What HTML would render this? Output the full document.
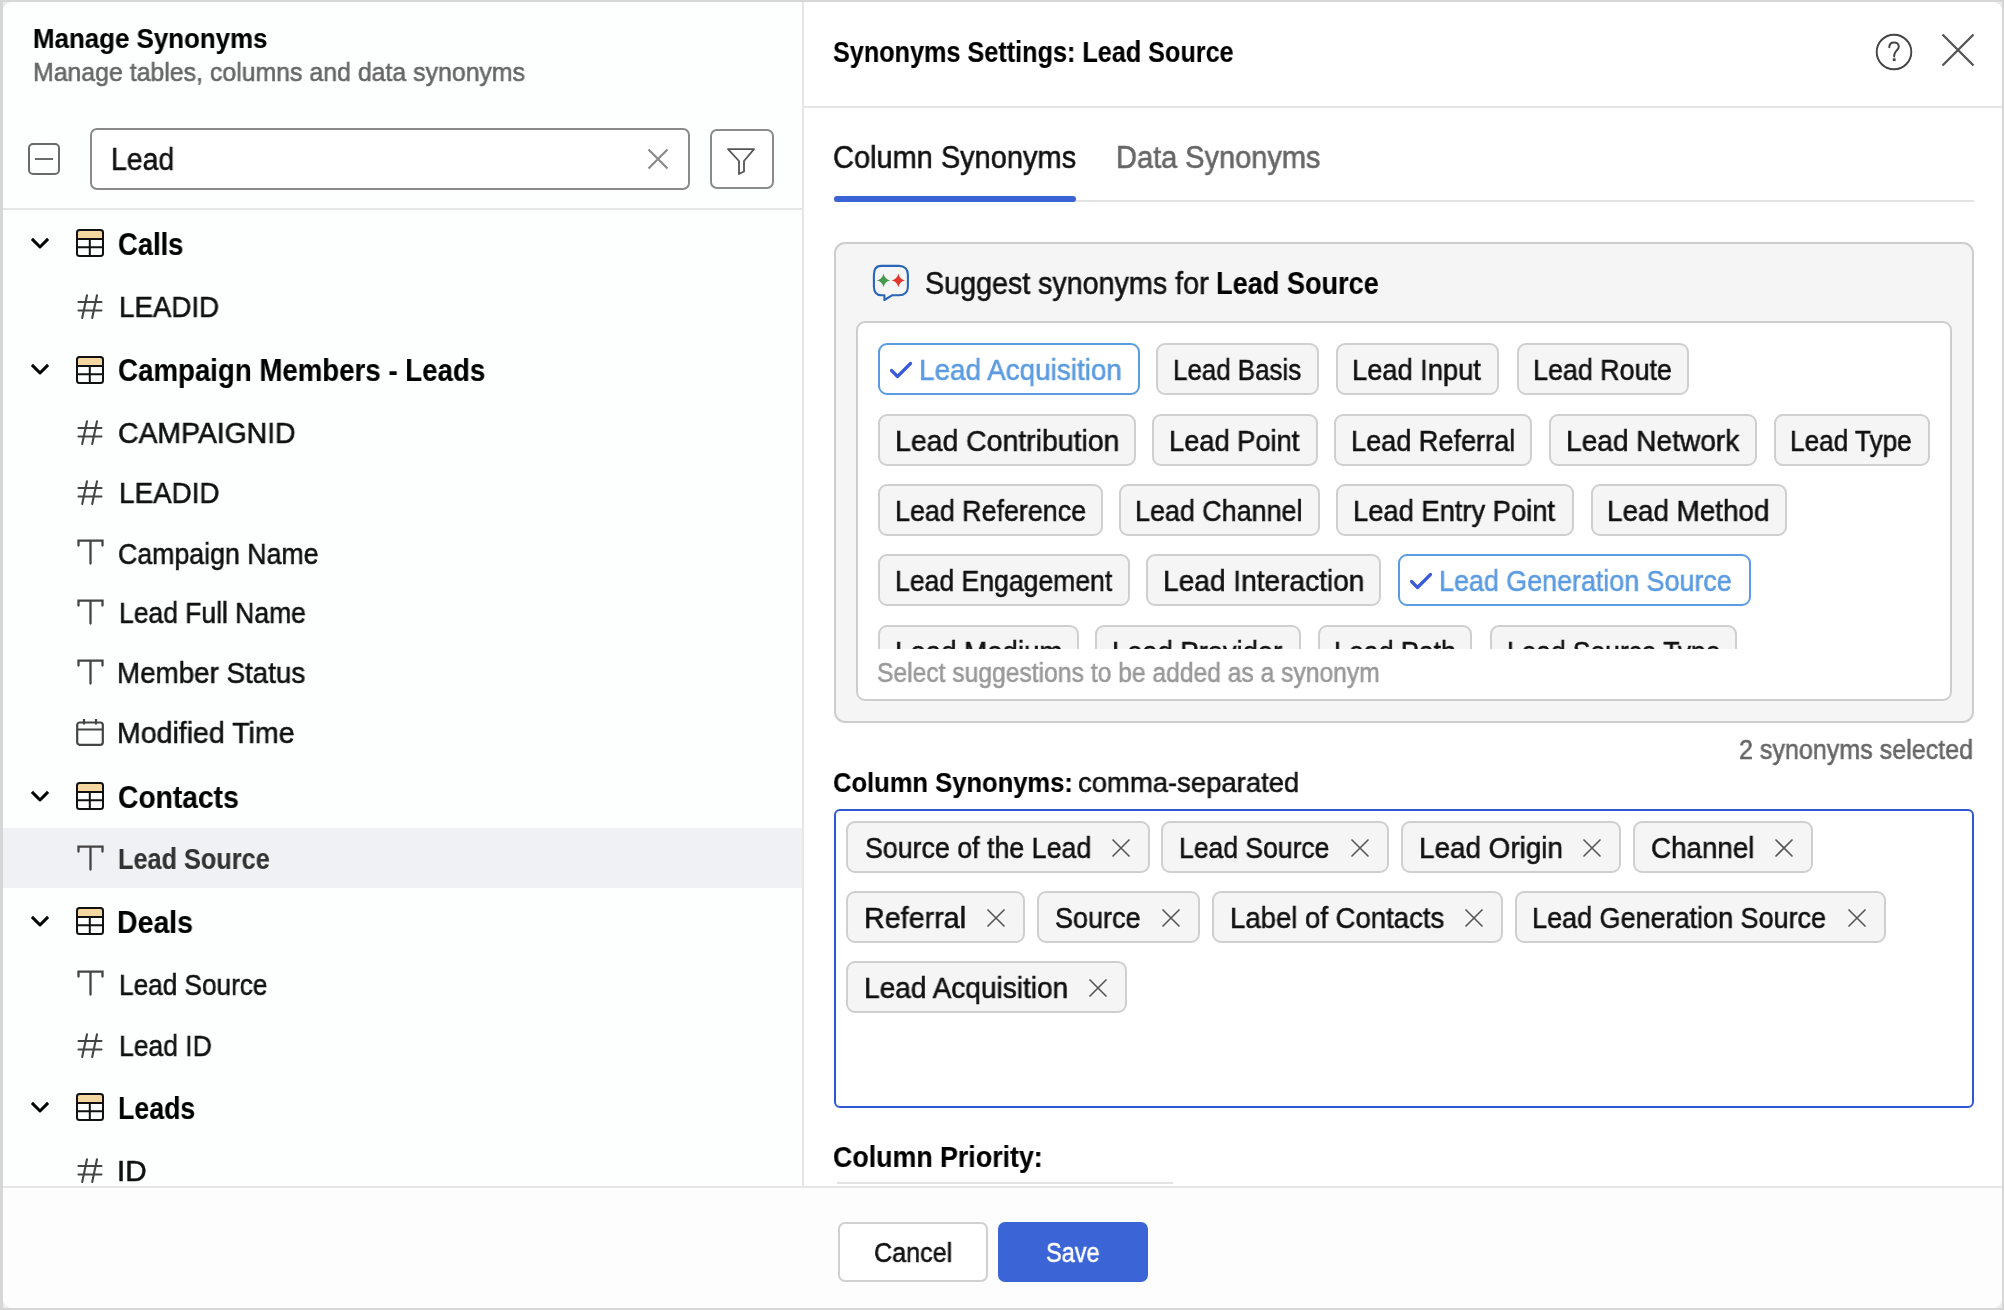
<!DOCTYPE html>
<html><head><meta charset="utf-8"><title>Manage Synonyms</title>
<style>
*{box-sizing:border-box;margin:0;padding:0}
html,body{width:2004px;height:1310px;overflow:hidden;background:#fff}
body{position:relative;font-family:"Liberation Sans",sans-serif;}
.abs{position:absolute}
.t{position:absolute;white-space:nowrap;line-height:1;transform-origin:0 0;will-change:transform;-webkit-text-stroke:0.55px currentColor}
.t.b{-webkit-text-stroke:0.15px currentColor}
.ic{position:absolute;overflow:visible}
.chip{position:absolute;background:#f5f5f5;border:2px solid #cfcfcf;border-radius:9px}
.chip.sel{background:#fff;border-color:#5b9be1}
</style></head><body>

<div class="abs" style="left:0;top:0;width:2004px;height:1310px;background:#d6d6d6"></div>
<div class="abs" style="left:3px;top:2px;width:1999px;height:1306px;background:#ececec"></div>
<div class="abs" style="left:3px;top:2px;width:1999px;height:1306px;background:#fdfdfd;border-radius:9px;overflow:hidden">
<div class="abs" style="left:0px;top:0px;width:799px;height:1184px;background:#fdfefe"></div>
<div class="abs" style="left:801px;top:0px;width:1198px;height:1184px;background:#fff"></div>
<div class="abs" style="left:-3px;top:1186px;width:2004px;height:124px;background:#fdfdfd"></div>
</div>
<div class="abs" style="left:802px;top:2px;width:2px;height:1184px;background:#e6e6e6"></div>
<div class="abs" style="left:3px;top:208px;width:799px;height:2px;background:#e6e6e6"></div>
<div class="abs" style="left:804px;top:106px;width:1198px;height:2px;background:#e6e6e6"></div>
<div class="abs" style="left:3px;top:1186px;width:1999px;height:2px;background:#e6e6e6"></div>
<div class="abs" style="left:28px;top:143px;width:32px;height:31.5px;border:2px solid #6a6a6a;border-radius:5px"></div>
<div class="abs" style="left:35px;top:157.5px;width:18px;height:2px;background:#6a6a6a"></div>
<div class="abs" style="left:90px;top:128px;width:599.5px;height:61.5px;border:2px solid #8a8a8a;border-radius:7px;background:#fff"></div>
<svg class="ic" style="left:647px;top:147.5px" width="22" height="22" viewBox="0 0 22 22"><path d="M1.5 1.5 L20.5 20.5 M20.5 1.5 L1.5 20.5" stroke="#8a8a8a" stroke-width="2.2"/></svg>
<div class="abs" style="left:710px;top:129px;width:64px;height:59.5px;border:2px solid #8a8a8a;border-radius:7px;background:#fff"></div>
<svg class="ic" style="left:726px;top:147px" width="30" height="29" viewBox="0 0 30 29"><path d="M2 2.2 H28 L18 14 V24.5 L13 27 V14 Z" fill="none" stroke="#555" stroke-width="1.8" stroke-linejoin="round"/></svg>
<div class="abs" style="left:3px;top:828px;width:799px;height:60px;background:#f0f1f4"></div>
<svg class="ic" style="left:30px;top:237.1px" width="20" height="13" viewBox="0 0 20 13"><path d="M1.9 1.9 L10 10 L18.1 1.9" fill="none" stroke="#000" stroke-width="3" stroke-linecap="butt" stroke-linejoin="round"/></svg><svg class="ic" style="left:75.8px;top:229.3px" width="28" height="28" viewBox="0 0 28 28"><rect x="1" y="1" width="26" height="8.6" rx="2" fill="#f3d6a0"/><rect x="1" y="1" width="26" height="26" rx="2.5" fill="none" stroke="#111" stroke-width="2"/><path d="M1 10 H27 M1 18.2 H27 M13.8 10 V27" stroke="#111" stroke-width="2" fill="none"/></svg>
<svg class="ic" style="left:77px;top:294.2px" width="26" height="26" viewBox="0 0 26 26"><path d="M10 1.2 L5.2 24 M20 1.2 L15.2 24 M1.5 8 H24.5 M1.5 16.5 H24.5" stroke="#444" stroke-width="2.1" stroke-linecap="round" fill="none"/></svg>
<svg class="ic" style="left:30px;top:363.3px" width="20" height="13" viewBox="0 0 20 13"><path d="M1.9 1.9 L10 10 L18.1 1.9" fill="none" stroke="#000" stroke-width="3" stroke-linecap="butt" stroke-linejoin="round"/></svg><svg class="ic" style="left:75.8px;top:355.5px" width="28" height="28" viewBox="0 0 28 28"><rect x="1" y="1" width="26" height="8.6" rx="2" fill="#f3d6a0"/><rect x="1" y="1" width="26" height="26" rx="2.5" fill="none" stroke="#111" stroke-width="2"/><path d="M1 10 H27 M1 18.2 H27 M13.8 10 V27" stroke="#111" stroke-width="2" fill="none"/></svg>
<svg class="ic" style="left:77px;top:420.4px" width="26" height="26" viewBox="0 0 26 26"><path d="M10 1.2 L5.2 24 M20 1.2 L15.2 24 M1.5 8 H24.5 M1.5 16.5 H24.5" stroke="#444" stroke-width="2.1" stroke-linecap="round" fill="none"/></svg>
<svg class="ic" style="left:77px;top:480.3px" width="26" height="26" viewBox="0 0 26 26"><path d="M10 1.2 L5.2 24 M20 1.2 L15.2 24 M1.5 8 H24.5 M1.5 16.5 H24.5" stroke="#444" stroke-width="2.1" stroke-linecap="round" fill="none"/></svg>
<svg class="ic" style="left:77px;top:539.3px" width="27" height="27" viewBox="0 0 27 27"><path d="M1.5 6.5 V1.6 H25.5 V6.5 M13.5 1.6 V24.6" stroke="#444" stroke-width="2.3" stroke-linecap="round" fill="none"/></svg>
<svg class="ic" style="left:77px;top:599.2px" width="27" height="27" viewBox="0 0 27 27"><path d="M1.5 6.5 V1.6 H25.5 V6.5 M13.5 1.6 V24.6" stroke="#444" stroke-width="2.3" stroke-linecap="round" fill="none"/></svg>
<svg class="ic" style="left:77px;top:659.2px" width="27" height="27" viewBox="0 0 27 27"><path d="M1.5 6.5 V1.6 H25.5 V6.5 M13.5 1.6 V24.6" stroke="#444" stroke-width="2.3" stroke-linecap="round" fill="none"/></svg>
<svg class="ic" style="left:76px;top:717.7px" width="28" height="28" viewBox="0 0 28 28"><rect x="1.2" y="4.5" width="25.6" height="22.3" rx="2.5" fill="none" stroke="#444" stroke-width="2.2"/><path d="M1.2 11.5 H26.8 M8 1 V6.5 M20 1 V6.5" stroke="#444" stroke-width="2.2" fill="none"/></svg>
<svg class="ic" style="left:30px;top:789.5px" width="20" height="13" viewBox="0 0 20 13"><path d="M1.9 1.9 L10 10 L18.1 1.9" fill="none" stroke="#000" stroke-width="3" stroke-linecap="butt" stroke-linejoin="round"/></svg><svg class="ic" style="left:75.8px;top:781.7px" width="28" height="28" viewBox="0 0 28 28"><rect x="1" y="1" width="26" height="8.6" rx="2" fill="#f3d6a0"/><rect x="1" y="1" width="26" height="26" rx="2.5" fill="none" stroke="#111" stroke-width="2"/><path d="M1 10 H27 M1 18.2 H27 M13.8 10 V27" stroke="#111" stroke-width="2" fill="none"/></svg>
<svg class="ic" style="left:77px;top:845.2px" width="27" height="27" viewBox="0 0 27 27"><path d="M1.5 6.5 V1.6 H25.5 V6.5 M13.5 1.6 V24.6" stroke="#444" stroke-width="2.3" stroke-linecap="round" fill="none"/></svg>
<svg class="ic" style="left:30px;top:914.9px" width="20" height="13" viewBox="0 0 20 13"><path d="M1.9 1.9 L10 10 L18.1 1.9" fill="none" stroke="#000" stroke-width="3" stroke-linecap="butt" stroke-linejoin="round"/></svg><svg class="ic" style="left:75.8px;top:907.1px" width="28" height="28" viewBox="0 0 28 28"><rect x="1" y="1" width="26" height="8.6" rx="2" fill="#f3d6a0"/><rect x="1" y="1" width="26" height="26" rx="2.5" fill="none" stroke="#111" stroke-width="2"/><path d="M1 10 H27 M1 18.2 H27 M13.8 10 V27" stroke="#111" stroke-width="2" fill="none"/></svg>
<svg class="ic" style="left:77px;top:970.4px" width="27" height="27" viewBox="0 0 27 27"><path d="M1.5 6.5 V1.6 H25.5 V6.5 M13.5 1.6 V24.6" stroke="#444" stroke-width="2.3" stroke-linecap="round" fill="none"/></svg>
<svg class="ic" style="left:77px;top:1032.8px" width="26" height="26" viewBox="0 0 26 26"><path d="M10 1.2 L5.2 24 M20 1.2 L15.2 24 M1.5 8 H24.5 M1.5 16.5 H24.5" stroke="#444" stroke-width="2.1" stroke-linecap="round" fill="none"/></svg>
<svg class="ic" style="left:30px;top:1100.7px" width="20" height="13" viewBox="0 0 20 13"><path d="M1.9 1.9 L10 10 L18.1 1.9" fill="none" stroke="#000" stroke-width="3" stroke-linecap="butt" stroke-linejoin="round"/></svg><svg class="ic" style="left:75.8px;top:1092.9px" width="28" height="28" viewBox="0 0 28 28"><rect x="1" y="1" width="26" height="8.6" rx="2" fill="#f3d6a0"/><rect x="1" y="1" width="26" height="26" rx="2.5" fill="none" stroke="#111" stroke-width="2"/><path d="M1 10 H27 M1 18.2 H27 M13.8 10 V27" stroke="#111" stroke-width="2" fill="none"/></svg>
<svg class="ic" style="left:77px;top:1158.2px" width="26" height="26" viewBox="0 0 26 26"><path d="M10 1.2 L5.2 24 M20 1.2 L15.2 24 M1.5 8 H24.5 M1.5 16.5 H24.5" stroke="#444" stroke-width="2.1" stroke-linecap="round" fill="none"/></svg>
<svg class="ic" style="left:1874px;top:32px" width="40" height="40" viewBox="0 0 40 40"><circle cx="20" cy="20" r="17.3" fill="none" stroke="#444" stroke-width="1.9"/><path d="M15.3 15.2 C15.3 12 17.4 10.4 20.1 10.4 C22.9 10.4 24.8 12.2 24.8 14.6 C24.8 17.8 21 18.8 20.3 22.6 L20.2 24.5" fill="none" stroke="#444" stroke-width="2" stroke-linecap="round"/><rect x="18.8" y="26.3" width="2.8" height="2.8" fill="#444"/></svg>
<svg class="ic" style="left:1941px;top:33px" width="34" height="34" viewBox="0 0 34 34"><path d="M1.5 1.5 L32.5 32.5 M32.5 1.5 L1.5 32.5" stroke="#555" stroke-width="2.3"/></svg>
<div class="abs" style="left:834px;top:199.5px;width:1140px;height:2px;background:#e3e3e3"></div>
<div class="abs" style="left:834px;top:196px;width:242px;height:6px;background:#3a63d6;border-radius:3px"></div>
<div class="abs" style="left:834px;top:242px;width:1140px;height:481px;background:#f5f5f5;border:2px solid #cdcdcd;border-radius:11px"></div>
<svg class="ic" style="left:872px;top:264px" width="38" height="38" viewBox="0 0 38 38"><path d="M9 1.9 H27 C32.5 1.9 35.9 5.3 35.9 10.8 V22.5 C35.9 28 32.5 31.3 27 31.3 H20 L12.4 36 V31.3 H9.5 C4.5 31.3 1.9 28 1.9 22.5 V10.8 C1.9 5.3 4.5 1.9 9 1.9 Z" fill="none" stroke="#2a66b8" stroke-width="2.1" stroke-linejoin="round"/><path d="M11.5 9.6 Q12.6 15.3 18.1 16.4 Q12.6 17.5 11.5 23.2 Q10.4 17.5 4.9 16.4 Q10.4 15.3 11.5 9.6 Z" fill="#46994c"/><path d="M26.3 9.6 Q27.4 15.3 32.9 16.4 Q27.4 17.5 26.3 23.2 Q25.2 17.5 19.7 16.4 Q25.2 15.3 26.3 9.6 Z" fill="#e2372b"/></svg>
<div class="abs" style="left:856px;top:321px;width:1096px;height:380px;background:#fff;border:2px solid #cdcdcd;border-radius:9px"></div>
<div class="abs" style="left:858px;top:323px;width:1091px;height:325.7px;overflow:hidden"><div class="abs" style="left:-858px;top:-323px;width:2004px;height:1310px">
<div class="chip sel" style="left:878.2px;top:343.0px;width:261.6px;height:52.0px"></div><svg class="ic" style="left:889.2px;top:360.5px" width="24" height="18" viewBox="0 0 24 18"><path d="M2.5 9.5 L8.5 15.5 L21.5 2.5" fill="none" stroke="#3a5bd9" stroke-width="3.2" stroke-linecap="round" stroke-linejoin="round"/></svg><div class="chip" style="left:1156.0px;top:343.0px;width:162.5px;height:52.0px"></div><div class="chip" style="left:1335.6px;top:343.0px;width:163.6px;height:52.0px"></div><div class="chip" style="left:1516.5px;top:343.0px;width:172.7px;height:52.0px"></div><div class="chip" style="left:878.2px;top:414.0px;width:258.3px;height:52.0px"></div><div class="chip" style="left:1152.0px;top:414.0px;width:165.6px;height:52.0px"></div><div class="chip" style="left:1334.0px;top:414.0px;width:198.0px;height:52.0px"></div><div class="chip" style="left:1549.4px;top:414.0px;width:208.0px;height:52.0px"></div><div class="chip" style="left:1773.7px;top:414.0px;width:156.3px;height:52.0px"></div><div class="chip" style="left:878.2px;top:484.0px;width:225.3px;height:52.0px"></div><div class="chip" style="left:1119.3px;top:484.0px;width:201.2px;height:52.0px"></div><div class="chip" style="left:1336.4px;top:484.0px;width:238.0px;height:52.0px"></div><div class="chip" style="left:1590.5px;top:484.0px;width:196.7px;height:52.0px"></div><div class="chip" style="left:878.2px;top:554.0px;width:252.2px;height:52.0px"></div><div class="chip" style="left:1146.3px;top:554.0px;width:235.0px;height:52.0px"></div><div class="chip sel" style="left:1398.4px;top:554.0px;width:352.3px;height:52.0px"></div><svg class="ic" style="left:1409.4px;top:571.5px" width="24" height="18" viewBox="0 0 24 18"><path d="M2.5 9.5 L8.5 15.5 L21.5 2.5" fill="none" stroke="#3a5bd9" stroke-width="3.2" stroke-linecap="round" stroke-linejoin="round"/></svg><div class="chip" style="left:878.2px;top:625.0px;width:201.3px;height:52.0px"></div><div class="chip" style="left:1095.4px;top:625.0px;width:205.6px;height:52.0px"></div><div class="chip" style="left:1317.5px;top:625.0px;width:154.7px;height:52.0px"></div><div class="chip" style="left:1490.0px;top:625.0px;width:247.0px;height:52.0px"></div>
<div class="t" id="sg0" style="left:919.38px;top:355.95px;font-size:29px;color:#5b9be1;transform:scaleX(0.9604)">Lead Acquisition</div>
<div class="t" id="sg1" style="left:1173.02px;top:355.95px;font-size:29px;color:#111;transform:scaleX(0.8933)">Lead Basis</div>
<div class="t" id="sg2" style="left:1351.95px;top:355.95px;font-size:29px;color:#111;transform:scaleX(0.9400)">Lead Input</div>
<div class="t" id="sg3" style="left:1533.44px;top:355.95px;font-size:29px;color:#111;transform:scaleX(0.9264)">Lead Route</div>
<div class="t" id="sg4" style="left:894.84px;top:426.95px;font-size:29px;color:#111;transform:scaleX(0.9804)">Lead Contribution</div>
<div class="t" id="sg5" style="left:1168.92px;top:426.95px;font-size:29px;color:#111;transform:scaleX(0.9398)">Lead Point</div>
<div class="t" id="sg6" style="left:1350.91px;top:426.95px;font-size:29px;color:#111;transform:scaleX(0.9348)">Lead Referral</div>
<div class="t" id="sg7" style="left:1565.85px;top:426.95px;font-size:29px;color:#111;transform:scaleX(0.9680)">Lead Network</div>
<div class="t" id="sg8" style="left:1790.47px;top:426.95px;font-size:29px;color:#111;transform:scaleX(0.9018)">Lead Type</div>
<div class="t" id="sg9" style="left:894.98px;top:496.95px;font-size:29px;color:#111;transform:scaleX(0.9260)">Lead Reference</div>
<div class="t" id="sg10" style="left:1135.46px;top:496.95px;font-size:29px;color:#111;transform:scaleX(0.9269)">Lead Channel</div>
<div class="t" id="sg11" style="left:1352.91px;top:496.95px;font-size:29px;color:#111;transform:scaleX(0.9424)">Lead Entry Point</div>
<div class="t" id="sg12" style="left:1607.33px;top:496.95px;font-size:29px;color:#111;transform:scaleX(0.9592)">Lead Method</div>
<div class="t" id="sg13" style="left:894.99px;top:566.95px;font-size:29px;color:#111;transform:scaleX(0.9167)">Lead Engagement</div>
<div class="t" id="sg14" style="left:1163.34px;top:566.95px;font-size:29px;color:#111;transform:scaleX(0.9685)">Lead Interaction</div>
<div class="t" id="sg15" style="left:1439.45px;top:566.95px;font-size:29px;color:#5b9be1;transform:scaleX(0.9266)">Lead Generation Source</div>
<div class="t" id="sg16" style="left:894.91px;top:637.95px;font-size:29px;color:#111;transform:scaleX(0.9529)">Lead Medium</div>
<div class="t" id="sg17" style="left:1111.89px;top:637.95px;font-size:29px;color:#111;transform:scaleX(0.9422)">Lead Provider</div>
<div class="t" id="sg18" style="left:1334.44px;top:637.95px;font-size:29px;color:#111;transform:scaleX(0.9224)">Lead Path</div>
<div class="t" id="sg19" style="left:1506.98px;top:637.95px;font-size:29px;color:#111;transform:scaleX(0.9087)">Lead Source Type</div>
</div></div>
<div class="abs" style="left:834px;top:809px;width:1140px;height:299px;background:#fff;border:2px solid #2f57d4;border-radius:6px"></div>
<div class="chip" style="left:846.3px;top:821.0px;width:303.9px;height:52.0px"></div><svg class="ic" style="left:1111.0px;top:837.7px" width="20" height="20" viewBox="0 0 20 20"><path d="M1.5 1.5 L18.5 18.5 M18.5 1.5 L1.5 18.5" stroke="#555" stroke-width="1.6"/></svg><div class="chip" style="left:1161.3px;top:821.0px;width:227.6px;height:52.0px"></div><svg class="ic" style="left:1349.7px;top:837.7px" width="20" height="20" viewBox="0 0 20 20"><path d="M1.5 1.5 L18.5 18.5 M18.5 1.5 L1.5 18.5" stroke="#555" stroke-width="1.6"/></svg><div class="chip" style="left:1400.7px;top:821.0px;width:220.7px;height:52.0px"></div><svg class="ic" style="left:1582.2px;top:837.7px" width="20" height="20" viewBox="0 0 20 20"><path d="M1.5 1.5 L18.5 18.5 M18.5 1.5 L1.5 18.5" stroke="#555" stroke-width="1.6"/></svg><div class="chip" style="left:1632.7px;top:821.0px;width:180.5px;height:52.0px"></div><svg class="ic" style="left:1774.0px;top:837.7px" width="20" height="20" viewBox="0 0 20 20"><path d="M1.5 1.5 L18.5 18.5 M18.5 1.5 L1.5 18.5" stroke="#555" stroke-width="1.6"/></svg><div class="chip" style="left:846.3px;top:891.0px;width:178.7px;height:52.0px"></div><svg class="ic" style="left:985.8px;top:907.7px" width="20" height="20" viewBox="0 0 20 20"><path d="M1.5 1.5 L18.5 18.5 M18.5 1.5 L1.5 18.5" stroke="#555" stroke-width="1.6"/></svg><div class="chip" style="left:1036.5px;top:891.0px;width:163.7px;height:52.0px"></div><svg class="ic" style="left:1161.0px;top:907.7px" width="20" height="20" viewBox="0 0 20 20"><path d="M1.5 1.5 L18.5 18.5 M18.5 1.5 L1.5 18.5" stroke="#555" stroke-width="1.6"/></svg><div class="chip" style="left:1211.6px;top:891.0px;width:291.7px;height:52.0px"></div><svg class="ic" style="left:1464.1px;top:907.7px" width="20" height="20" viewBox="0 0 20 20"><path d="M1.5 1.5 L18.5 18.5 M18.5 1.5 L1.5 18.5" stroke="#555" stroke-width="1.6"/></svg><div class="chip" style="left:1514.5px;top:891.0px;width:371.7px;height:52.0px"></div><svg class="ic" style="left:1847.0px;top:907.7px" width="20" height="20" viewBox="0 0 20 20"><path d="M1.5 1.5 L18.5 18.5 M18.5 1.5 L1.5 18.5" stroke="#555" stroke-width="1.6"/></svg><div class="chip" style="left:846.3px;top:961.0px;width:281.2px;height:52.0px"></div><svg class="ic" style="left:1088.3px;top:977.7px" width="20" height="20" viewBox="0 0 20 20"><path d="M1.5 1.5 L18.5 18.5 M18.5 1.5 L1.5 18.5" stroke="#555" stroke-width="1.6"/></svg>
<div class="abs" style="left:837px;top:1182px;width:336px;height:2px;background:#e3e3e3"></div>
<div class="abs" style="left:838px;top:1222px;width:150px;height:60px;border:2px solid #d0d0d0;border-radius:7px;background:#fff"></div>
<div class="abs" style="left:998px;top:1222px;width:150px;height:60px;border-radius:7px;background:#3b64d6"></div>
<div class="t b" id="t_title" style="left:32.82px;top:26.44px;font-size:27px;font-weight:700;color:#000;transform:scaleX(0.9589)">Manage Synonyms</div>
<div class="t" id="t_sub" style="left:32.87px;top:59.49px;font-size:26px;color:#666;transform:scaleX(0.9563)">Manage tables, columns and data synonyms</div>
<div class="t" id="t_lead" style="left:110.98px;top:144.05px;font-size:31px;color:#111;transform:scaleX(0.9162)">Lead</div>
<div class="t b" id="tr0" style="left:118.04px;top:229.15px;font-size:31px;font-weight:700;color:#000;transform:scaleX(0.8832)">Calls</div>
<div class="t" id="tr1" style="left:118.55px;top:293.25px;font-size:29px;color:#111;transform:scaleX(0.9556)">LEADID</div>
<div class="t b" id="tr2" style="left:117.98px;top:355.35px;font-size:31px;font-weight:700;color:#000;transform:scaleX(0.8920)">Campaign Members - Leads</div>
<div class="t" id="tr3" style="left:118.36px;top:419.45px;font-size:29px;color:#111;transform:scaleX(0.9783)">CAMPAIGNID</div>
<div class="t" id="tr4" style="left:118.54px;top:479.35px;font-size:29px;color:#111;transform:scaleX(0.9596)">LEADID</div>
<div class="t" id="tr5" style="left:118.46px;top:539.55px;font-size:29px;color:#111;transform:scaleX(0.9216)">Campaign Name</div>
<div class="t" id="tr6" style="left:118.66px;top:599.45px;font-size:29px;color:#111;transform:scaleX(0.9130)">Lead Full Name</div>
<div class="t" id="tr7" style="left:117.34px;top:659.45px;font-size:29px;color:#111;transform:scaleX(0.9570)">Member Status</div>
<div class="t" id="tr8" style="left:117.23px;top:719.25px;font-size:29px;color:#111;transform:scaleX(0.9831)">Modified Time</div>
<div class="t b" id="tr9" style="left:117.97px;top:781.55px;font-size:31px;font-weight:700;color:#000;transform:scaleX(0.9106)">Contacts</div>
<div class="t b" id="tr10" style="left:117.56px;top:845.45px;font-size:29px;font-weight:700;color:#333;transform:scaleX(0.8716)">Lead Source</div>
<div class="t b" id="tr11" style="left:116.91px;top:906.95px;font-size:31px;font-weight:700;color:#000;transform:scaleX(0.9183)">Deals</div>
<div class="t" id="tr12" style="left:118.67px;top:970.65px;font-size:29px;color:#111;transform:scaleX(0.9026)">Lead Source</div>
<div class="t" id="tr13" style="left:118.64px;top:1031.85px;font-size:29px;color:#111;transform:scaleX(0.9126)">Lead ID</div>
<div class="t b" id="tr14" style="left:118.06px;top:1092.75px;font-size:31px;font-weight:700;color:#000;transform:scaleX(0.8620)">Leads</div>
<div class="t" id="tr15" style="left:117.05px;top:1157.25px;font-size:29px;color:#111;transform:scaleX(1.0214)">ID</div>
<div class="t b" id="t_rtitle" style="left:833.04px;top:37.10px;font-size:30px;font-weight:700;color:#000;transform:scaleX(0.8403)">Synonyms Settings: Lead Source</div>
<div class="t" id="t_tab1" style="left:832.99px;top:141.95px;font-size:31px;color:#111;transform:scaleX(0.9346)">Column Synonyms</div>
<div class="t" id="t_tab2" style="left:1115.93px;top:141.95px;font-size:31px;color:#666;transform:scaleX(0.9344)">Data Synonyms</div>
<div class="t" id="t_sug1" style="left:924.98px;top:267.95px;font-size:31px;color:#111;transform:scaleX(0.9245)">Suggest synonyms for</div>
<div class="t b" id="t_sug2" style="left:1215.73px;top:267.95px;font-size:31px;font-weight:700;color:#000;transform:scaleX(0.8751)">Lead Source</div>
<div class="t" id="t_hint" style="left:876.99px;top:660.14px;font-size:27px;color:#999;transform:scaleX(0.9128)">Select suggestions to be added as a synonym</div>
<div class="t" id="t_sel" style="left:1739.46px;top:736.74px;font-size:27px;color:#666;transform:scaleX(0.9288)">2 synonyms selected</div>
<div class="t b" id="t_cs1" style="left:832.99px;top:769.09px;font-size:28px;font-weight:700;color:#000;transform:scaleX(0.9125)">Column Synonyms:</div>
<div class="t" id="t_cs2" style="left:1077.91px;top:769.09px;font-size:28px;color:#111;transform:scaleX(0.9806)">comma-separated</div>
<div class="t b" id="t_prio" style="left:832.97px;top:1142.75px;font-size:29px;font-weight:700;color:#000;transform:scaleX(0.9229)">Column Priority:</div>
<div class="t" id="t_cancel" style="left:874.46px;top:1240.14px;font-size:27px;color:#111;transform:scaleX(0.9314)">Cancel</div>
<div class="t" id="t_save" style="left:1046.08px;top:1240.14px;font-size:27px;color:#fff;transform:scaleX(0.8712)">Save</div>
<div class="t" id="sy0" style="left:865.46px;top:833.95px;font-size:29px;color:#111;transform:scaleX(0.9233)">Source of the Lead</div>
<div class="t" id="sy1" style="left:1179.47px;top:833.95px;font-size:29px;color:#111;transform:scaleX(0.9146)">Lead Source</div>
<div class="t" id="sy2" style="left:1419.34px;top:833.95px;font-size:29px;color:#111;transform:scaleX(0.9602)">Lead Origin</div>
<div class="t" id="sy3" style="left:1651.44px;top:833.95px;font-size:29px;color:#111;transform:scaleX(0.9572)">Channel</div>
<div class="t" id="sy4" style="left:864.29px;top:903.95px;font-size:29px;color:#111;transform:scaleX(0.9892)">Referral</div>
<div class="t" id="sy5" style="left:1055.43px;top:903.95px;font-size:29px;color:#111;transform:scaleX(0.9315)">Source</div>
<div class="t" id="sy6" style="left:1229.84px;top:903.95px;font-size:29px;color:#111;transform:scaleX(0.9490)">Label of Contacts</div>
<div class="t" id="sy7" style="left:1532.42px;top:903.95px;font-size:29px;color:#111;transform:scaleX(0.9308)">Lead Generation Source</div>
<div class="t" id="sy8" style="left:864.34px;top:973.95px;font-size:29px;color:#111;transform:scaleX(0.9669)">Lead Acquisition</div>
</body></html>
